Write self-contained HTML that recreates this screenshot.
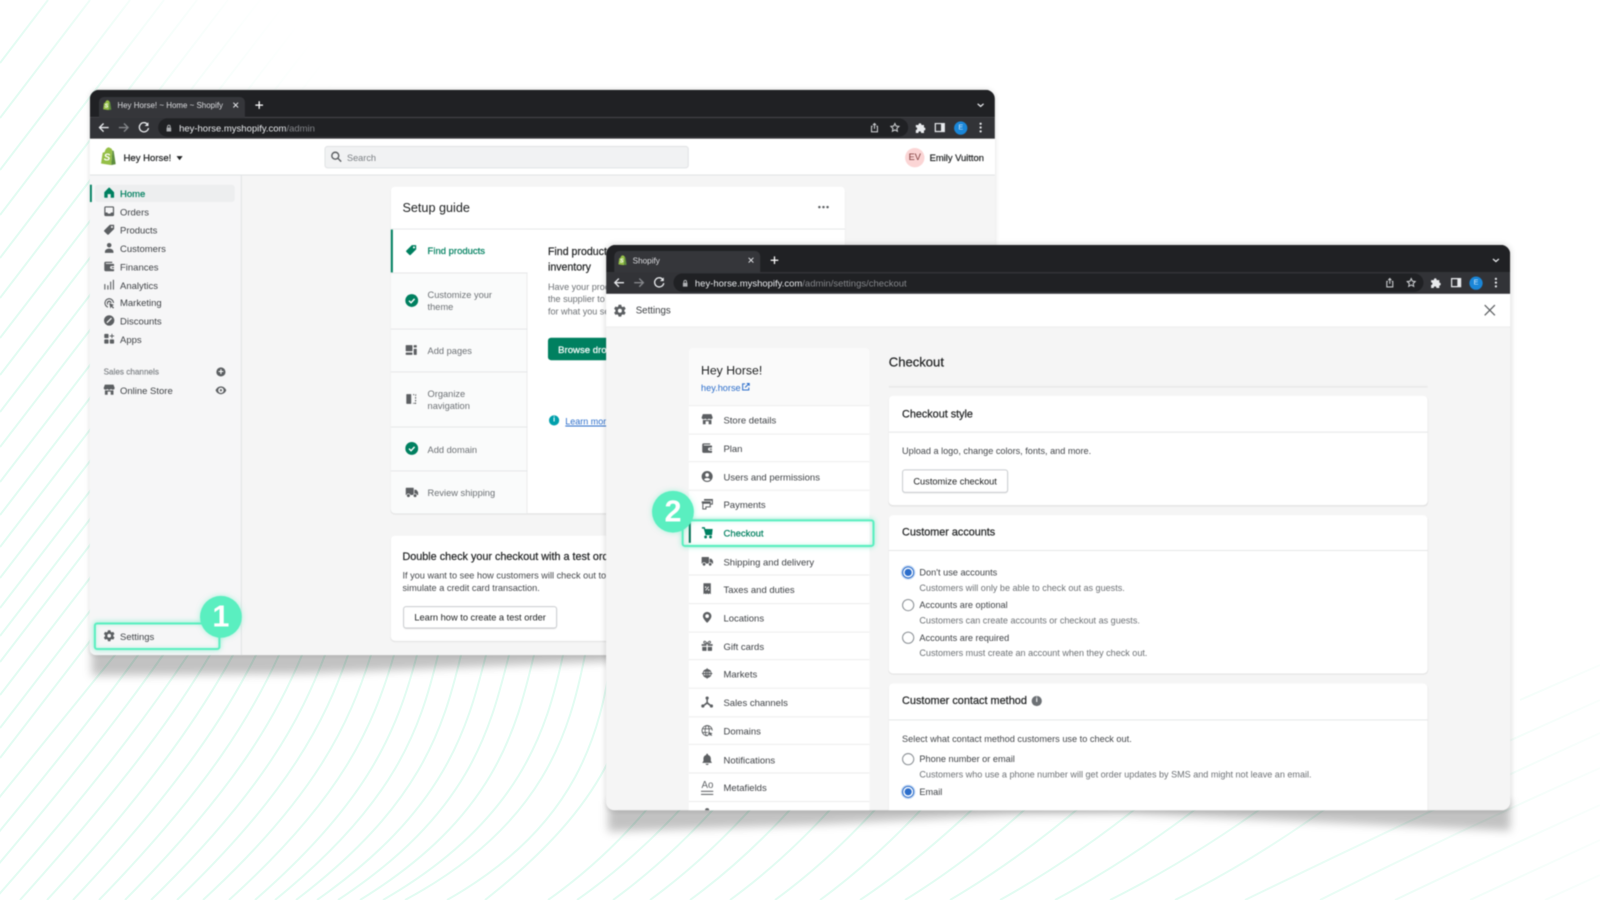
<!DOCTYPE html>
<html lang="en"><head><meta charset="utf-8"><title>Shopify settings</title>
<style>
html,body{margin:0;padding:0;width:1600px;height:900px;overflow:hidden;background:#fff}
body{font-family:"Liberation Sans",sans-serif;position:relative}
#bg{position:absolute;left:0;top:0}
#s{position:absolute;left:0;top:0;width:1568px;height:882px;transform:scale(1.020408);transform-origin:0 0;filter:blur(.4px)}
.w{position:absolute;overflow:hidden;background:#f5f5f5}
.in{position:absolute;width:1568px;height:882px}
.b{position:absolute}
.t{position:absolute;line-height:12px;height:12px;margin-top:-5.4px;white-space:nowrap;font-size:9.3px;color:#3f4246}
.m{-webkit-text-stroke:.2px currentColor}
.g{color:#6d7175;font-size:8.9px}
.i{position:absolute;width:12px;height:12px;color:#5c5f62;fill:currentColor;margin:-6px 0 0 -6px}
.c{position:absolute;fill:none;stroke:#e8eaed;stroke-width:1.3;width:12px;height:12px;margin:-6px 0 0 -6px}
.row{position:absolute;left:675px;width:177px;background:#fff;border-bottom:1px solid #ececec;box-sizing:border-box}
.card{position:absolute;background:#fff;border-radius:4px;box-shadow:0 1px 1px rgba(0,0,0,.08)}
.hr{position:absolute;height:1px;background:#e6e7e8}
.radio{position:absolute;width:10px;height:10px;margin:-6.5px 0 0 -6px;border:1px solid #8c9196;border-radius:50%;background:#fff}
.radio.on{border-color:#2c6ecb;box-shadow:inset 0 0 0 1.5px #fff;background:#2c6ecb;outline:1px solid #bcd3f2}
.btn{position:absolute;background:#fff;border:1px solid #c9cccf;border-radius:3px;box-sizing:border-box;box-shadow:0 1px 0 rgba(0,0,0,.05);font-size:9.1px;color:#202223;text-align:center}
.hl{position:absolute;border:2px solid #5aefc0;border-radius:3px;box-sizing:border-box;box-shadow:0 0 5px rgba(90,239,192,.6),inset 0 0 4px rgba(90,239,192,.35)}
.num{position:absolute;border-radius:50%;background:#5aefc0;color:#fff;font-weight:bold;text-align:center;width:41px;height:41px;line-height:41px;font-size:30px;box-shadow:0 0 5px rgba(90,239,192,.5)}
</style></head><body>
<svg width="0" height="0" style="position:absolute">
<defs>
<symbol id="home" viewBox="0 0 20 20"><path d="M18 9 10.800 1.600a1.100 1.100 0 0 0-1.600 0L2 9v8a1 1 0 0 0 1 1h4.500v-6h5v6H17a1 1 0 0 0 1-1z"/></symbol>
<symbol id="orders" viewBox="0 0 20 20"><path fill-rule="evenodd" d="M4 2h12a2 2 0 0 1 2 2v12a2 2 0 0 1-2 2H4a2 2 0 0 1-2-2V4a2 2 0 0 1 2-2zm0 2v8h3l1 2h4l1-2h3V4z"/></symbol>
<symbol id="tag" viewBox="0 0 20 20"><path fill-rule="evenodd" d="M17.500 2H11L2 11a1.500 1.500 0 0 0 0 2.100L7 18a1.500 1.500 0 0 0 2.100 0l9-9V2.600a.6.6 0 0 0-.6-.6zM14.500 7.500a1.700 1.700 0 1 1 0-3.400 1.700 1.700 0 0 1 0 3.400z"/></symbol>
<symbol id="person" viewBox="0 0 20 20"><circle cx="10" cy="5.500" r="3.700"/><path d="M3 18v-1.500C3 13 6 11 10 11s7 2 7 5.500V18z"/></symbol>
<symbol id="wallet" viewBox="0 0 20 20"><path fill-rule="evenodd" d="M4 2.500h11v2H4.500v1.500H17a1 1 0 0 1 1 1v2.500h-4a2.500 2.500 0 0 0 0 5h4V17a1 1 0 0 1-1 1H4a2 2 0 0 1-2-2V4.500a2 2 0 0 1 2-2z"/><rect x="14" y="11" width="4" height="2" rx="1"/></symbol>
<symbol id="bars" viewBox="0 0 20 20"><rect x="2" y="9" width="1.800" height="9"/><rect x="7" y="11" width="1.800" height="7"/><rect x="11.500" y="5" width="1.800" height="13"/><rect x="16" y="2" width="1.800" height="16"/></symbol>
<symbol id="mark" viewBox="0 0 20 20"><path d="M10 2a8 8 0 0 0-2 15.700v-2.100A6 6 0 1 1 16 10h2a8 8 0 0 0-8-8z"/><path d="M10 6a4 4 0 0 0-2 7.400v-2.500A2 2 0 1 1 12 10h2a4 4 0 0 0-4-4z"/><path d="m10 10 8 3-3 1.500 3 3-1.500 1.500-3-3-1.500 3z"/></symbol>
<symbol id="disc" viewBox="0 0 20 20"><path fill-rule="evenodd" d="M10 1.500a8.500 8.500 0 1 1 0 17 8.500 8.500 0 0 1 0-17zM13 5.500 5.500 13 7 14.500 14.500 7z"/></symbol>
<symbol id="apps" viewBox="0 0 20 20"><rect x="2" y="2" width="7" height="7" rx="1.500"/><rect x="2" y="11" width="7" height="7" rx="1.500"/><rect x="11" y="11" width="7" height="7" rx="1.500"/><path d="M13.700 2h1.600v2.700H18v1.600h-2.700V9h-1.600V6.300H11V4.700h2.700z"/></symbol>
<symbol id="store" viewBox="0 0 20 20"><path d="M3 1.500h14l2 5.500a2.800 2.800 0 0 1-3 2.800 3 3 0 0 1-3-1.300 3.600 3.600 0 0 1-6 0 3 3 0 0 1-3 1.300A2.800 2.800 0 0 1 1 7z"/><path d="M3 11h5.500v0H11.500 17v7h-4.500v-5h-5v5H3z"/></symbol>
<symbol id="gear" viewBox="0 0 20 20"><path fill-rule="evenodd" d="M8 1h4l.6 2.600 1.500.9 2.600-.8 2 3.400-2 1.800v2.200l2 1.800-2 3.400-2.600-.8-1.500.9L12 19H8l-.6-2.600-1.500-.9-2.600.8-2-3.400 2-1.800V8.900L1.300 7.100l2-3.400 2.600.8 1.500-.9zM10 13a3 3 0 1 0 0-6 3 3 0 0 0 0 6z"/></symbol>
<symbol id="truck" viewBox="0 0 20 20"><path d="M1 4a1 1 0 0 1 1-1h10a1 1 0 0 1 1 1v10H1z"/><path d="M14 6h2.500a1 1 0 0 1 .8.400L19.800 10v4H14z"/><circle cx="5" cy="15" r="2.800" stroke="#fff" stroke-width="1"/><circle cx="15" cy="15" r="2.800" stroke="#fff" stroke-width="1"/></symbol>
<symbol id="pages" viewBox="0 0 20 20"><rect x="1" y="2" width="11" height="10" rx="1"/><rect x="1" y="14" width="11" height="4" rx="1"/><rect x="14" y="2" width="5" height="4" rx="1"/><rect x="14" y="8" width="5" height="10" rx="1"/></symbol>
<symbol id="nav" viewBox="0 0 20 20"><path d="M2 3a1 1 0 0 1 1-1h7v16H3a1 1 0 0 1-1-1z"/><path d="M13 2h2v1.800h-2zM17 2h1v3h-1.800V3.800H17zM16.200 7H18v2.500h-1.800zM16.200 11.500H18v2.500h-1.800zM16.200 16H18v2h-3v-1.800h1.200zM13 16.200h1V18h-1z"/></symbol>
<symbol id="cart" viewBox="0 0 20 20"><path d="M1.500 1h4a1 1 0 0 1 1 .8L6.900 4H19l-1 10H7.500L4.500 3.500h-3z"/><circle cx="7.500" cy="17" r="2.300"/><circle cx="15.500" cy="17" r="2.300"/></symbol>
<symbol id="tax" viewBox="0 0 20 20"><path fill-rule="evenodd" d="M4 1h12v18l-2-1.500-2 1.500-2-1.500L8 19l-2-1.500L4 19zM12 6 7 12l1 1 5-6zM7.500 6a1.300 1.300 0 1 0 0 2.600 1.300 1.300 0 0 0 0-2.600zM12.500 10.500a1.300 1.300 0 1 0 0 2.600 1.300 1.300 0 0 0 0-2.600z"/></symbol>
<symbol id="pin" viewBox="0 0 20 20"><path fill-rule="evenodd" d="M10 1a7 7 0 0 0-7 7c0 4.500 7 11 7 11s7-6.500 7-11a7 7 0 0 0-7-7zm0 10a3 3 0 1 1 0-6 3 3 0 0 1 0 6z"/></symbol>
<symbol id="gift" viewBox="0 0 20 20"><path d="M1 7h8v3H1zM11 7h8v3h-8zM2 11.500h7V18H3a1 1 0 0 1-1-1zM11 11.500h7V17a1 1 0 0 1-1 1h-6z"/><path fill="none" stroke="currentColor" stroke-width="1.600" d="M10 6.500C8 2 5 1.500 4.500 3.500S7 6.500 10 6.500c2-4.500 5-5 5.500-3S13 6.500 10 6.500z"/></symbol>
<symbol id="globe" viewBox="0 0 20 20"><g fill="none" stroke="currentColor" stroke-width="1.600"><circle cx="10" cy="10" r="6.500"/><ellipse cx="10" cy="10" rx="2.800" ry="6.500"/><path d="M1.500 10h17M10 1.500v17M4 6h12M4 14h12"/></g></symbol>
<symbol id="nodes" viewBox="0 0 20 20"><circle cx="10" cy="3.500" r="2.600"/><circle cx="3" cy="16.500" r="2.600"/><circle cx="17" cy="16.500" r="2.600"/><path d="M8.800 5h2.400v5.300l5.800 5-1.500 1.800-5.500-4-5.500 4L3 15.300l5.800-5z"/></symbol>
<symbol id="domain" viewBox="0 0 20 20"><g fill="none" stroke="currentColor" stroke-width="1.400"><path d="M10.500 18.300A8.300 8.300 0 1 1 18.300 10"/><ellipse cx="10" cy="10" rx="3.300" ry="8.300"/><path d="M2 7h16M2 13h9"/></g><path d="m12 12 7 2.500-2.500 1.200 1.800 1.800-1.200 1.200-1.800-1.800L14.500 19z"/></symbol>
<symbol id="bell" viewBox="0 0 20 20"><path d="M10 1a1.500 1.500 0 0 1 1.500 1.500v.6c2.800.7 4.500 3 4.500 6V13l2 3H2l2-3V9.100c0-3 1.700-5.300 4.500-6v-.6A1.500 1.500 0 0 1 10 1z"/><path d="M7.500 17.500h5a2.500 2 0 0 1-5 0z"/></symbol>
<symbol id="user" viewBox="0 0 20 20"><path fill-rule="evenodd" d="M10 1a9 9 0 1 1 0 18 9 9 0 0 1 0-18zm0 3.500a3 3 0 1 0 0 6 3 3 0 0 0 0-6zM4.800 14.800A6.800 6.800 0 0 0 10 17a6.800 6.800 0 0 0 5.200-2.200C14 13 12 12.300 10 12.300S6 13 4.800 14.800z"/></symbol>
<symbol id="pay" viewBox="0 0 20 20"><g fill="none" stroke="currentColor" stroke-width="1.700"><path d="M6 4V2.500h12.500V10H15"/><path d="M2 8.500V6.500h13v8H8v3.500H3V8.500"/></g><rect x="5" y="2" width="14" height="2.500"/><rect x="2" y="7" width="13" height="2.500"/></symbol>
<symbol id="shop" viewBox="0 0 20 22"><path fill="#95bf47" d="M15.500 4.500 13.800 4C13.500 2.500 12.500 1 11 1c-.5-.6-1.200-.9-2-.7C6.500 1 5 3.500 4.500 6L2 6.800 0 20l12.500 2L14 4z"/><path fill="#5e8e3e" d="M15.500 4.500c-.3 0-1.500-.2-1.500-.2L12.500 22 18 20.800z"/><text x="7.300" y="16.500" font-family="Liberation Sans,sans-serif" font-size="12" font-weight="bold" font-style="italic" fill="#fff" text-anchor="middle">S</text></symbol>
<symbol id="back" viewBox="0 0 12 12"><path d="M10.500 6h-9M5.500 2 1.500 6l4 4"/></symbol>
<symbol id="fwd" viewBox="0 0 12 12"><path d="M1.500 6h9M6.500 2l4 4-4 4" stroke="#85878b"/></symbol>
<symbol id="rel" viewBox="0 0 12 12"><path d="M10 3.500A4.500 4.500 0 1 0 10.500 6.500"/><path d="M10.500 .8v3.700H6.800z" fill="#e8eaed" stroke="none"/></symbol>
<symbol id="star" viewBox="0 0 12 12"><path d="m6 1.300 1.400 3 3.300.4-2.400 2.300.6 3.300L6 8.700 3.100 10.300l.6-3.300L1.300 4.700l3.300-.4z" stroke="#c6c8cb"/></symbol>
<symbol id="share" viewBox="0 0 12 12"><path d="M3.800 4.500H2.500V11h7V4.500H8.200M6 7.500V1.200M4.200 3 6 1.200 7.800 3" stroke="#c6c8cb"/></symbol>
<symbol id="puzzle" viewBox="0 0 12 12"><path stroke="none" fill="#e8eaed" d="M1.500 3.500h2.700a1.400 1.400 0 1 1 2.700 0h2.600v2.500a1.400 1.400 0 1 1 0 2.800v2.500H6.600a1.300 1.300 0 1 0-2.500 0H1.500V8.300a1.300 1.300 0 1 0 0-2.600z"/></symbol>
<symbol id="panel" viewBox="0 0 12 12"><path stroke="none" fill="#e8eaed" fill-rule="evenodd" d="M1 1.500h10v9H1zM2.200 2.700v6.600h5V2.700z"/></symbol>
<symbol id="dots" viewBox="0 0 12 12"><g stroke="none" fill="#e8eaed"><circle cx="6" cy="2.300" r="1.100"/><circle cx="6" cy="6" r="1.100"/><circle cx="6" cy="9.700" r="1.100"/></g></symbol>
<symbol id="chev" viewBox="0 0 12 12"><path d="m2.500 4.500 3.500 3 3.500-3" stroke-width="1.500"/></symbol>
<symbol id="x" viewBox="0 0 12 12"><path d="m2.500 2.500 7 7M9.500 2.500l-7 7" stroke-width="1.400"/></symbol>
<symbol id="plus" viewBox="0 0 12 12"><path d="M6 1.500v9M1.500 6h9" stroke="#fff" stroke-width="1.500"/></symbol>
<symbol id="lock" viewBox="0 0 12 12"><path stroke="none" fill="#aeb0b3" d="M3 5.500h6V10.500H3z"/><path stroke="#aeb0b3" d="M4.300 5.500V4a1.700 1.700 0 0 1 3.400 0v1.500"/></symbol>
<linearGradient id="f1" gradientUnits="userSpaceOnUse" x1="0" y1="200" x2="350" y2="-50"><stop offset=".2" stop-color="#e2fcf2"/><stop offset=".36" stop-color="#e2fcf2" stop-opacity=".75"/><stop offset=".51" stop-color="#e2fcf2" stop-opacity=".35"/><stop offset=".8" stop-color="#e2fcf2" stop-opacity="0"/></linearGradient>
<linearGradient id="f2" gradientUnits="userSpaceOnUse" x1="1150" y1="0" x2="1600" y2="0"><stop offset="0" stop-color="#e2fcf2"/><stop offset=".5" stop-color="#e2fcf2" stop-opacity=".7"/><stop offset="1" stop-color="#e2fcf2" stop-opacity=".2"/></linearGradient>
</defs></svg>

<svg id="bg" width="1600" height="900" viewBox="0 0 1600 900" fill="none" stroke-width="2">
<g stroke="url(#f1)">
<path d="M0 63 48 0M0 118 90 0M0 170 130 0M0 215 164 0M0 258 197 0M0 298 228 0M0 338 260 0M0 375 288 0M0 412 317 0M0 447 344 0M0 482 371 0M0 515 396 0M0 547 420 0M0 578 445 0M0 608 468 0M0 636 490 0"/>
</g>
<g stroke="#e2fcf2">
<path d="M0 662 100 532M0 695 100 565M0 728 100 598M0 758 100 628"/>
<path d="M123 640 115 655C85 692 25 767-84 900"/>
<path d="M146 640 138 655C109 695 52 770-58 900"/>
<path d="M171 640 163 655C133 698 78 772-32 900"/>
<path d="M196 640 188 655C157 701 105 775-6 900"/>
<path d="M218 640 210 655C181 704 131 777 20 900"/>
<path d="M241 640 233 655C205 706 158 780 47 900"/>
<path d="M264 640 256 655C229 709 184 782 73 900"/>
<path d="M287 640 279 655C253 712 211 785 99 900"/>
<path d="M310 640 302 655C277 715 237 787 125 900"/>
<path d="M333 640 325 655C301 718 264 790 151 900"/>
<path d="M356 640 348 655C325 721 290 792 177 900"/>
<path d="M379 640 371 655C349 724 317 795 203 900"/>
<path d="M402 640 394 655C373 727 343 797 229 900"/>
<path d="M425 640 417 655C397 730 370 800 255 900"/>
<path d="M446 640 438 655C420 730 395 803 275 900"/>
<path d="M469 640 461 655C443 730 420 806 296 900"/>
<path d="M494 640 486 655C467 730 445 810 317 900"/>
<path d="M517 640 509 655C490 730 470 813 338 900"/>
<path d="M542 640 534 655C516 730 495 817 360 900"/>
<path d="M571 640 563 655C547 730 520 821 383 900"/>
<path d="M593 640 585 655C570 730 545 825 405 900"/>
<path d="M620 640 612 655C600 730 580 825 447 900"/>
<path d="M648 640 640 655C626 730 612 800 485 900"/>
<path d="M653 802Q605 860 548 900"/>
<path d="M687 802Q634 860 577 900"/>
<path d="M720 802Q668 860 613 900"/>
<path d="M757 802Q705 860 650 900"/>
<path d="M797 802Q745 860 690 900"/>
<path d="M837 802Q785 860 730 900"/>
<path d="M882 802Q830 860 775 900"/>
<path d="M928 802Q875 860 820 900"/>
<path d="M980 802Q920 860 860 900"/>
<path d="M1033 802Q970 860 905 900"/>
<path d="M1086 802Q1018 860 950 900"/>
<path d="M1144 802Q1072 860 1000 900"/>
</g>
<g stroke="url(#f2)">
<path d="M1205 802Q1130 860 1055 900"/>
<path d="M1270 802Q1190 860 1110 900"/>
<path d="M1335 802Q1255 860 1175 900"/>
<path d="M1600 733Q1420 815 1245 900"/>
<path d="M1600 768Q1460 830 1320 900"/>
<path d="M1600 805Q1500 850 1395 900"/>
<path d="M1600 840Q1535 870 1470 900"/>
<path d="M1600 875 1545 900"/>
<path d="M1600 700 1500 745M1600 665 1520 700"/>
</g>
</svg>

<div id="s">
<svg class="b" style="left:0;top:0" width="1568" height="882"><g style="filter:blur(4.500px)" fill="#000" fill-opacity=".24"><polygon points="90,630 90,662 300,660 600,648 975,642 975,630"/><polygon points="596,785 596,815 800,808 1000,798 1100,797 1480,814 1480,785"/></g></svg>

<!-- WINDOW 1 -->
<div class="w" style="left:88px;top:88px;width:887px;height:554px;border-radius:9px 9px 6px 6px;box-shadow:0 0 5px rgba(0,0,0,.12)">
<div class="in" style="left:-88px;top:-88px">
<div class="b" style="left:88px;top:88px;width:887px;height:27px;background:#202124"></div>
<div class="b" style="left:97px;top:95px;width:143px;height:20px;background:#35363a;border-radius:5px 5px 0 0"></div>
<div class="b" style="left:88px;top:115px;width:887px;height:21px;background:#323337"></div>
<div class="b" style="left:155px;top:116px;width:735px;height:18px;background:#202124;border-radius:9px"></div>
<svg class="i" style="left:105px;top:103px;width:9px;height:10px;margin:-5px 0 0 -4.500px"><use href="#shop"/></svg>
<div class="t" style="left:115px;top:103px;font-size:7.800px;color:#dcdde0">Hey Horse! ~ Home ~ Shopify</div>
<svg class="c" style="left:231px;top:103px;width:8px;height:8px;margin:-4px"><use href="#x"/></svg>
<svg class="c" style="left:254px;top:103px;width:10px;height:10px;margin:-5px"><use href="#plus"/></svg>
<svg class="c" style="left:961px;top:103px;width:10px;height:10px;margin:-5px"><use href="#chev"/></svg>
<svg class="c" style="left:102px;top:125px"><use href="#back"/></svg>
<svg class="c" style="left:121px;top:125px"><use href="#fwd"/></svg>
<svg class="c" style="left:141px;top:125px"><use href="#rel"/></svg>
<svg class="c" style="left:165px;top:125px;width:9px;height:9px;margin:-4.500px"><use href="#lock"/></svg>
<div class="t" style="left:175.500px;top:125px;font-size:9.300px;color:#e8eaed">hey-horse.myshopify.com<span style="color:#85878b">/admin</span></div>
<svg class="c" style="left:857px;top:125px;width:10px;height:10px;margin:-5px"><use href="#share"/></svg>
<svg class="c" style="left:877px;top:125px;width:10px;height:10px;margin:-5px"><use href="#star"/></svg>
<svg class="c" style="left:902px;top:125px"><use href="#puzzle"/></svg>
<svg class="c" style="left:921px;top:125px"><use href="#panel"/></svg>
<div class="b" style="left:935px;top:119px;width:13px;height:13px;border-radius:50%;background:#1a86d8;color:#cfe8fb;font-size:7px;line-height:13px;text-align:center">E</div>
<svg class="c" style="left:961px;top:125px"><use href="#dots"/></svg>

<div class="b" style="left:88px;top:136px;width:887px;height:36px;background:#fff;border-bottom:1px solid #e1e3e5;box-sizing:border-box"></div>
<svg class="i" style="left:107px;top:153px;width:16px;height:18px;margin:-9px 0 0 -8px"><use href="#shop"/></svg>
<div class="t m" style="left:121px;top:154px;font-size:9.400px;color:#202223">Hey Horse!</div>
<div class="b" style="left:173px;top:153px;border:3px solid transparent;border-top:4px solid #202223;border-bottom:0"></div>
<div class="b" style="left:318px;top:143px;width:357px;height:22px;background:#f1f2f3;border:1px solid #e1e3e5;border-radius:3px;box-sizing:border-box"></div>
<svg class="b" style="left:324px;top:148px" width="11" height="11" viewBox="0 0 12 12" fill="none" stroke="#5c5f62" stroke-width="1.500"><circle cx="5" cy="5" r="3.700"/><path d="m7.800 7.800 3.500 3.500"/></svg>
<div class="t" style="left:340px;top:154px;font-size:9px;color:#7b7f83">Search</div>
<div class="b" style="left:887px;top:145px;width:19px;height:19px;border-radius:50%;background:#fbd5d5;color:#7d3a3a;font-size:9px;line-height:19px;text-align:center">EV</div>
<div class="t m" style="left:911px;top:154px;font-size:9.200px;color:#202223">Emily Vuitton</div>

<div class="b" style="left:88px;top:172px;width:148px;height:470px;background:#f6f6f7;border-right:1px solid #e1e3e5"></div>
<div class="b" style="left:93px;top:181px;width:137px;height:17px;background:#edeeef;border-radius:3px"></div>
<div class="b" style="left:88px;top:181px;width:2px;height:17px;background:#008060"></div>
<svg class="i" style="left:107px;top:189px;color:#008060"><use href="#home"/></svg><div class="t m" style="left:117.600px;top:189px;color:#008060">Home</div>
<svg class="i" style="left:107px;top:207px"><use href="#orders"/></svg><div class="t" style="left:117.600px;top:207px">Orders</div>
<svg class="i" style="left:107px;top:225px"><use href="#tag"/></svg><div class="t" style="left:117.600px;top:225px">Products</div>
<svg class="i" style="left:107px;top:243px"><use href="#person"/></svg><div class="t" style="left:117.600px;top:243px">Customers</div>
<svg class="i" style="left:107px;top:261px"><use href="#wallet"/></svg><div class="t" style="left:117.600px;top:261px">Finances</div>
<svg class="i" style="left:107px;top:279px"><use href="#bars"/></svg><div class="t" style="left:117.600px;top:279px">Analytics</div>
<svg class="i" style="left:107px;top:297px"><use href="#mark"/></svg><div class="t" style="left:117.600px;top:296px">Marketing</div>
<svg class="i" style="left:107px;top:314px"><use href="#disc"/></svg><div class="t" style="left:117.600px;top:314px">Discounts</div>
<svg class="i" style="left:107px;top:332px"><use href="#apps"/></svg><div class="t" style="left:117.600px;top:332px">Apps</div>
<div class="t" style="left:101.500px;top:364px;font-size:8px;color:#7d8185;-webkit-text-stroke:.15px #7d8185">Sales channels</div>
<div class="b" style="left:212px;top:360px;width:9px;height:9px;border-radius:50%;background:#5c5f62;color:#fff;font-size:9px;line-height:9px;text-align:center;font-weight:bold">+</div>
<svg class="i" style="left:107px;top:382px"><use href="#store"/></svg><div class="t" style="left:117.600px;top:382px">Online Store</div>
<svg class="b" style="left:211px;top:377px" width="11" height="11" viewBox="0 0 20 20"><path fill="#5c5f62" fill-rule="evenodd" d="M10 3c5 0 8.500 4 9.500 7-1 3-4.500 7-9.500 7S1.500 13 .5 10c1-3 4.500-7 9.500-7zm0 2.200a4.800 4.800 0 1 0 0 9.600 4.800 4.800 0 0 0 0-9.600zM10 8a2 2 0 1 1 0 4 2 2 0 0 1 0-4z"/></svg>
<svg class="i" style="left:107px;top:623px"><use href="#gear"/></svg><div class="t" style="left:117.600px;top:623px">Settings</div>

<div class="card" style="left:383px;top:183px;width:445px;height:320px"></div>
<div class="t" style="left:394.400px;top:203px;font-size:12.400px;color:#202223">Setup guide</div>
<svg class="b" style="left:801px;top:200px" width="12" height="6"><circle cx="2" cy="3" r="1.200" fill="#5c5f62"/><circle cx="6" cy="3" r="1.200" fill="#5c5f62"/><circle cx="10" cy="3" r="1.200" fill="#5c5f62"/></svg>
<div class="hr" style="left:383px;top:224px;width:445px"></div>
<div class="b" style="left:383px;top:225px;width:134px;height:278px;background:#fafbfb;border-right:1px solid #ebecec;border-radius:0 0 0 4px;box-sizing:border-box"></div>
<div class="b" style="left:383px;top:225px;width:134px;height:42px;background:#fff"></div>
<div class="b" style="left:383px;top:225px;width:2px;height:42px;background:#008060"></div>
<div class="hr" style="left:383px;top:267px;width:134px"></div><div class="hr" style="left:383px;top:322px;width:134px"></div><div class="hr" style="left:383px;top:364px;width:134px"></div><div class="hr" style="left:383px;top:418px;width:134px"></div><div class="hr" style="left:383px;top:461px;width:134px"></div>
<svg class="i" style="left:403px;top:245px;color:#008060"><use href="#tag"/></svg><div class="t m" style="left:419px;top:245px;color:#008060;font-size:9.300px">Find products</div>
<svg class="b" style="left:397px;top:288px" width="13" height="13"><circle cx="6.500" cy="6.500" r="6.300" fill="#008060"/><path d="m3.800 6.700 2 2 3.500-3.800" fill="none" stroke="#fff" stroke-width="1.400"/></svg>
<div class="t g" style="left:419px;top:288px;font-size:9.100px">Customize your</div><div class="t g" style="left:419px;top:300px;font-size:9.100px">theme</div>
<svg class="i" style="left:403px;top:343px"><use href="#pages"/></svg><div class="t g" style="left:419px;top:343px;font-size:9.100px">Add pages</div>
<svg class="i" style="left:403px;top:391px"><use href="#nav"/></svg><div class="t g" style="left:419px;top:385px;font-size:9.100px">Organize</div><div class="t g" style="left:419px;top:397px;font-size:9.100px">navigation</div>
<svg class="b" style="left:397px;top:433px" width="13" height="13"><circle cx="6.500" cy="6.500" r="6.300" fill="#008060"/><path d="m3.800 6.700 2 2 3.500-3.800" fill="none" stroke="#fff" stroke-width="1.400"/></svg>
<div class="t g" style="left:419px;top:440px;font-size:9.100px">Add domain</div>
<svg class="i" style="left:403px;top:482px;width:13px;height:13px;margin:-6.500px"><use href="#truck"/></svg><div class="t g" style="left:419px;top:482px;font-size:9.100px">Review shipping</div>

<div class="t m" style="left:537px;top:247px;font-size:10.400px;color:#202223">Find products for your</div>
<div class="t m" style="left:537px;top:262px;font-size:10.400px;color:#202223">inventory</div>
<div class="t g" style="left:537px;top:280px">Have your products shipped by</div>
<div class="t g" style="left:537px;top:292px">the supplier to your customers</div>
<div class="t g" style="left:537px;top:304px">for what you sell online</div>
<div class="b" style="left:537px;top:331px;width:90px;height:22px;background:#008060;border-radius:3px"></div>
<div class="t m" style="left:547px;top:342px;color:#fff;font-size:9.400px">Browse dropshipping</div>
<div class="b" style="left:538px;top:407px;width:10px;height:10px;border-radius:50%;background:#00a0ac;color:#fff;font-size:7px;line-height:10px;text-align:center;font-weight:bold">i</div>
<div class="t" style="left:554px;top:412px;font-size:8.800px;color:#2c6ecb;text-decoration:underline">Learn more about</div>

<div class="card" style="left:383px;top:525px;width:445px;height:103px"></div>
<div class="t m" style="left:394.400px;top:545px;font-size:10.600px;color:#202223">Double check your checkout with a test order</div>
<div class="t" style="left:394.400px;top:563px;font-size:9px;color:#44474b">If you want to see how customers will check out to</div>
<div class="t" style="left:394.400px;top:575px;font-size:9px;color:#44474b">simulate a credit card transaction.</div>
<div class="btn" style="left:395px;top:594px;width:151px;height:22px;line-height:20px">Learn how to create a test order</div>
</div></div>

<div class="hl" style="left:92px;top:610px;width:124px;height:27px"></div>
<div class="num" style="left:196px;top:584px">1</div>

<!-- WINDOW 2 -->
<div class="w" style="left:594px;top:240px;width:886px;height:554px;border-radius:9px 9px 8px 8px;box-shadow:0 0 6px rgba(0,0,0,.16)">
<div class="in" style="left:-594px;top:-240px">
<div class="b" style="left:594px;top:240px;width:886px;height:27px;background:#202124"></div>
<div class="b" style="left:602px;top:246px;width:143px;height:21px;background:#35363a;border-radius:5px 5px 0 0"></div>
<div class="b" style="left:594px;top:267px;width:886px;height:21px;background:#323337"></div>
<div class="b" style="left:660px;top:268px;width:735px;height:18px;background:#202124;border-radius:9px"></div>
<svg class="i" style="left:610px;top:255px;width:9px;height:10px;margin:-5px 0 0 -4.500px"><use href="#shop"/></svg>
<div class="t" style="left:620px;top:255px;font-size:8px;color:#dcdde0">Shopify</div>
<svg class="c" style="left:736px;top:255px;width:8px;height:8px;margin:-4px"><use href="#x"/></svg>
<svg class="c" style="left:759px;top:255px;width:10px;height:10px;margin:-5px"><use href="#plus"/></svg>
<svg class="c" style="left:1466px;top:255px;width:10px;height:10px;margin:-5px"><use href="#chev"/></svg>
<svg class="c" style="left:607px;top:277px"><use href="#back"/></svg>
<svg class="c" style="left:626px;top:277px"><use href="#fwd"/></svg>
<svg class="c" style="left:646px;top:277px"><use href="#rel"/></svg>
<svg class="c" style="left:671px;top:277px;width:9px;height:9px;margin:-4.500px"><use href="#lock"/></svg>
<div class="t" style="left:681px;top:277px;font-size:9.300px;color:#e8eaed">hey-horse.myshopify.com<span style="color:#85878b">/admin/settings/checkout</span></div>
<svg class="c" style="left:1362px;top:277px;width:10px;height:10px;margin:-5px"><use href="#share"/></svg>
<svg class="c" style="left:1383px;top:277px;width:10px;height:10px;margin:-5px"><use href="#star"/></svg>
<svg class="c" style="left:1407px;top:277px"><use href="#puzzle"/></svg>
<svg class="c" style="left:1427px;top:277px"><use href="#panel"/></svg>
<div class="b" style="left:1440px;top:271px;width:13px;height:13px;border-radius:50%;background:#1a86d8;color:#cfe8fb;font-size:7px;line-height:13px;text-align:center">E</div>
<svg class="c" style="left:1466px;top:277px"><use href="#dots"/></svg>

<div class="b" style="left:594px;top:288px;width:886px;height:33px;background:#fff;border-bottom:1px solid #ececec;box-sizing:border-box"></div>
<svg class="i" style="left:607px;top:304px;width:13px;height:13px;margin:-6.500px"><use href="#gear"/></svg>
<div class="t" style="left:623px;top:304px;font-size:9.500px;color:#3a3d40">Settings</div>
<svg class="b" style="left:1454px;top:298px" width="12" height="12" fill="none" stroke="#5c5f62" stroke-width="1.200"><path d="m1 1 10 10M11 1 1 11"/></svg>

<div class="b" style="left:675px;top:341px;width:177px;height:56px;background:#fafafa;border-radius:4px 4px 0 0;border-bottom:1px solid #ececec"></div>
<div class="t" style="left:687px;top:362px;font-size:12px;color:#202223">Hey Horse!</div>
<div class="t" style="left:687px;top:379px;font-size:9px;color:#2c6ecb">hey.horse</div>
<svg class="b" style="left:727px;top:375px" width="8" height="8" viewBox="0 0 10 10" fill="none" stroke="#2c6ecb" stroke-width="1.300"><path d="M4 1.500H1V9h7.500V6M4 6l5-5M6 1h3v3"/></svg>

<div class="row" style="top:398px;height:27.700px"></div><div class="row" style="top:425.700px;height:27.700px"></div><div class="row" style="top:453.400px;height:27.700px"></div><div class="row" style="top:481.100px;height:27.700px"></div><div class="row" style="top:508.800px;height:27.700px"></div><div class="row" style="top:536.500px;height:27.700px"></div><div class="row" style="top:564.200px;height:27.700px"></div><div class="row" style="top:591.900px;height:27.700px"></div><div class="row" style="top:619.600px;height:27.700px"></div><div class="row" style="top:647.300px;height:27.700px"></div><div class="row" style="top:675px;height:27.700px"></div><div class="row" style="top:702.700px;height:27.700px"></div><div class="row" style="top:730.400px;height:27.700px"></div><div class="row" style="top:758.100px;height:27.700px"></div><div class="row" style="top:785.800px;height:27.700px"></div>
<div class="b" style="left:675px;top:512px;width:2px;height:20px;background:#006e52"></div>
<svg class="i" style="left:693px;top:411px"><use href="#store"/></svg><div class="t" style="left:709px;top:411px">Store details</div>
<svg class="i" style="left:693px;top:439px"><use href="#wallet"/></svg><div class="t" style="left:709px;top:439px">Plan</div>
<svg class="i" style="left:693px;top:467px"><use href="#user"/></svg><div class="t" style="left:709px;top:467px">Users and permissions</div>
<svg class="i" style="left:693px;top:494px"><use href="#pay"/></svg><div class="t" style="left:709px;top:494px">Payments</div>
<svg class="i" style="left:693px;top:522px;color:#008060"><use href="#cart"/></svg><div class="t m" style="left:709px;top:522px;color:#008060">Checkout</div>
<svg class="i" style="left:693px;top:550px"><use href="#truck"/></svg><div class="t" style="left:709px;top:550px">Shipping and delivery</div>
<svg class="i" style="left:693px;top:577px"><use href="#tax"/></svg><div class="t" style="left:709px;top:577px">Taxes and duties</div>
<svg class="i" style="left:693px;top:605px"><use href="#pin"/></svg><div class="t" style="left:709px;top:605px">Locations</div>
<svg class="i" style="left:693px;top:633px"><use href="#gift"/></svg><div class="t" style="left:709px;top:633px">Gift cards</div>
<svg class="i" style="left:693px;top:660px"><use href="#globe"/></svg><div class="t" style="left:709px;top:660px">Markets</div>
<svg class="i" style="left:693px;top:688px"><use href="#nodes"/></svg><div class="t" style="left:709px;top:688px">Sales channels</div>
<svg class="i" style="left:693px;top:716px"><use href="#domain"/></svg><div class="t" style="left:709px;top:716px">Domains</div>
<svg class="i" style="left:693px;top:744px"><use href="#bell"/></svg><div class="t" style="left:709px;top:744px">Notifications</div>
<div class="t" style="left:687.500px;top:769px;font-size:9.500px;color:#5c5f62">Ao</div>
<div class="b" style="left:687px;top:775px;width:12px;height:1px;background:#5c5f62"></div><div class="b" style="left:687px;top:777.500px;width:12px;height:1px;background:#5c5f62"></div>
<div class="t" style="left:709px;top:771px">Metafields</div>
<div class="b" style="left:691px;top:792px;width:4px;height:4px;border-radius:50%;background:#5c5f62"></div>

<div class="t m" style="left:871px;top:354.500px;font-size:12.800px;color:#202223">Checkout</div>
<div class="hr" style="left:871px;top:378px;width:528px;height:1.500px;background:#ebebeb"></div>

<div class="card" style="left:871px;top:388px;width:528px;height:107px"></div>
<div class="t m" style="left:884px;top:405.500px;font-size:10.600px;color:#202223">Checkout style</div>
<div class="hr" style="left:871px;top:423px;width:528px"></div>
<div class="t" style="left:884px;top:441px;font-size:8.950px;color:#44474b">Upload a logo, change colors, fonts, and more.</div>
<div class="btn" style="left:884px;top:460px;width:104px;height:23px;line-height:22px">Customize checkout</div>

<div class="card" style="left:871px;top:505px;width:528px;height:155px"></div>
<div class="t m" style="left:884px;top:521.500px;font-size:10.600px;color:#202223">Customer accounts</div>
<div class="hr" style="left:871px;top:539px;width:528px"></div>
<div class="radio on" style="left:890px;top:561px"></div><div class="t" style="left:901px;top:560px;font-size:9px">Don't use accounts</div>
<div class="t g" style="left:901px;top:575px">Customers will only be able to check out as guests.</div>
<div class="radio" style="left:890px;top:593px"></div><div class="t" style="left:901px;top:592px;font-size:9px">Accounts are optional</div>
<div class="t g" style="left:901px;top:607px">Customers can create accounts or checkout as guests.</div>
<div class="radio" style="left:890px;top:625px"></div><div class="t" style="left:901px;top:624px;font-size:9px">Accounts are required</div>
<div class="t g" style="left:901px;top:639px">Customers must create an account when they check out.</div>

<div class="card" style="left:871px;top:670px;width:528px;height:140px"></div>
<div class="t m" style="left:884px;top:686.500px;font-size:10.700px;color:#202223">Customer contact method</div>
<div class="b" style="left:1011px;top:682px;width:10px;height:10px;border-radius:50%;background:#6d7175;color:#fff;font-size:7px;line-height:10px;text-align:center;font-weight:bold">i</div>
<div class="hr" style="left:871px;top:705px;width:528px"></div>
<div class="t" style="left:884px;top:723px;font-size:9px;color:#44474b">Select what contact method customers use to check out.</div>
<div class="radio" style="left:890px;top:744px"></div><div class="t" style="left:901px;top:743px;font-size:9px">Phone number or email</div>
<div class="t g" style="left:901px;top:758px">Customers who use a phone number will get order updates by SMS and might not leave an email.</div>
<div class="radio on" style="left:890px;top:776px"></div><div class="t" style="left:901px;top:775px;font-size:9px">Email</div>
</div></div>

<div class="hl" style="left:668px;top:509px;width:189px;height:27px"></div>
<div class="num" style="left:639px;top:481px">2</div>
</div>
</body></html>
